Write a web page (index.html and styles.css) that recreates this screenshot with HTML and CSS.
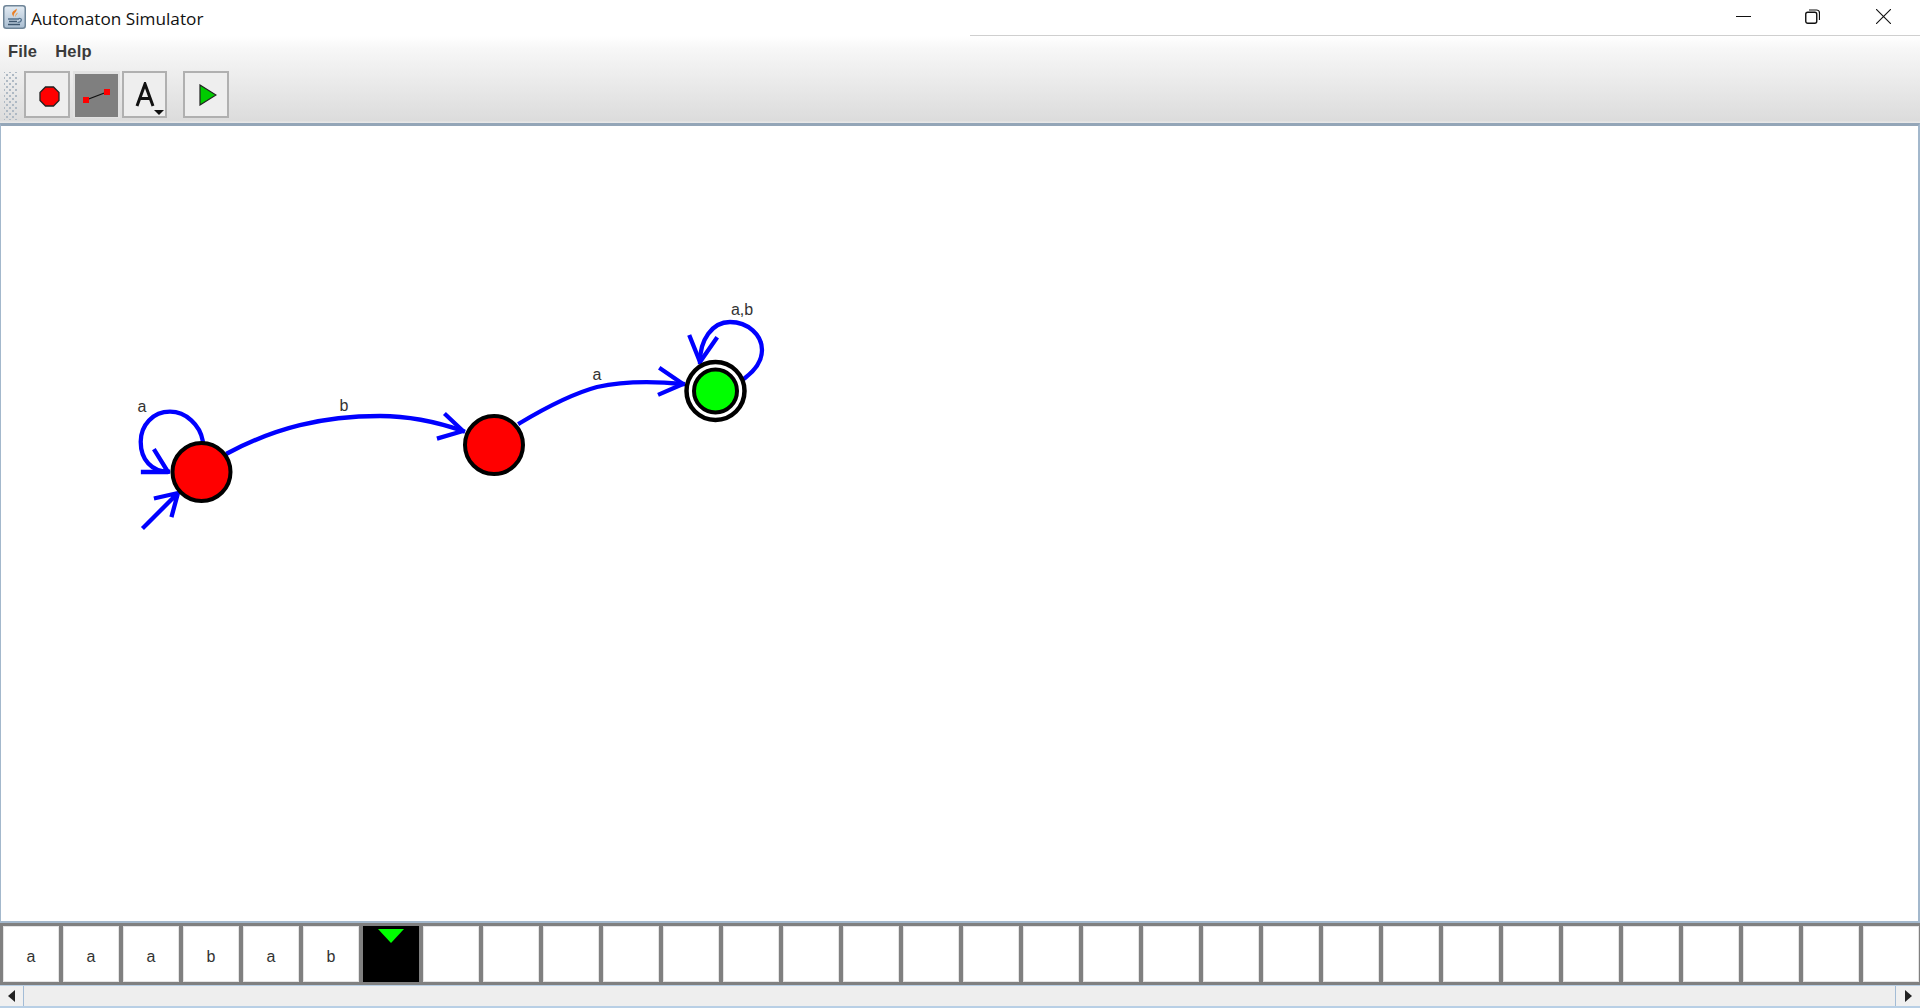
FILE: index.html
```html
<!DOCTYPE html>
<html lang="en">
<head>
<meta charset="utf-8">
<title>Automaton Simulator</title>
<link rel="stylesheet" href="styles.css">
</head>
<body>
<div class="app">
  <div class="top-shadow"></div>
  <header class="titlebar">
    <svg class="app-icon" width="23" height="24" viewBox="0 0 23 24">
      <defs><linearGradient id="ico" x1="0" y1="0" x2="0" y2="1"><stop offset="0" stop-color="#e3ebf3"/><stop offset="1" stop-color="#a9bdd1"/></linearGradient></defs>
      <rect x="0.75" y="0.75" width="21.5" height="22.5" rx="2.5" fill="url(#ico)" stroke="#6f8598" stroke-width="1.5"/>
      <path d="M13.5 3.5c1.5 3-4 4.500-2.500 8.500-2.500-2.500-2.500-4.500-.5-6 1.200-.9 2.500-1.300 3-2.500z" fill="#ea7f26"/>
      <path d="M14.500 7.500c.5 2-2.500 2.500-1.500 5-1.500-1.500-.5-3.500 1.500-5z" fill="#f19a3e"/>
      <path d="M5 14h11" stroke="#53708c" stroke-width="1.500"/>
      <path d="M6 16.500h8" stroke="#3d566e" stroke-width="1.500"/>
      <path d="M5 19.500h12" stroke="#3d566e" stroke-width="1.500"/>
      <path d="M15.500 13.500c4-.5 4 3.500-1 4" stroke="#53708c" stroke-width="1.200" fill="none"/>
    </svg>
    <span class="title">Automaton Simulator</span>
    <div class="window-controls">
      <svg class="win-min" width="15" height="15" viewBox="0 0 15 15"><path d="M0 7.500h15" stroke="#111" stroke-width="1"/></svg>
      <svg class="win-max" width="15" height="15" viewBox="0 0 15 15"><rect x="0.75" y="3.25" width="11" height="11" rx="2" fill="none" stroke="#111" stroke-width="1.400"/><path d="M4 1h7.500a3 3 0 0 1 3 3v7" fill="none" stroke="#111" stroke-width="1.200"/></svg>
      <svg class="win-close" width="15" height="15" viewBox="0 0 15 15"><path d="M0 0l15 15M15 0L0 15" stroke="#111" stroke-width="1.100"/></svg>
    </div>
  </header>
  <div class="chrome">
    <nav class="menubar"><span class="menu-item">File</span><span class="menu-item">Help</span></nav>
    <div class="toolbar">
      <div class="grip"></div>
      <div class="tool tool-state">
        <svg width="21" height="21" viewBox="0 0 21 21"><polygon points="6.500,1 14.500,1 20,6.500 20,14.500 14.500,20 6.500,20 1,14.500 1,6.500" fill="#f00" stroke="#222" stroke-width="1.300"/></svg>
      </div>
      <div class="tool tool-active">
        <svg width="27" height="14" viewBox="0 0 27 14"><path d="M3 11L24 3" stroke="#111" stroke-width="1.300"/><rect x="0" y="8" width="6" height="6" fill="#f00"/><rect x="21" y="0" width="6" height="6" fill="#f00"/></svg>
      </div>
      <div class="tool tool-text">
        <svg width="20" height="25" viewBox="0 0 20 25"><path d="M2 24L10 2L18 24M5 16.500H15" fill="none" stroke="#111" stroke-width="3"/></svg>
        <span class="caret"></span>
      </div>
      <div class="tool tool-run">
        <svg width="18" height="22" viewBox="0 0 18 22"><polygon points="1,1 17,11 1,21" fill="#0c0" stroke="#222" stroke-width="1.200"/></svg>
      </div>
    </div>
  </div>
  <main class="canvas">
    <svg class="diagram" width="1917" height="1008" viewBox="0 0 1917 1008">
      <g class="edges" transform="translate(-1 -126)">
        <path d="M202.700 440.700C200 425 186 411.700 170 411.700C153 411.700 140.700 425 140.700 441.700C140.700 460 152 471.700 168 471.700"/>
        <path d="M143 472H168L155 451"/>
        <path d="M144 527L178 493M156 498L178 493L172 515"/>
        <path d="M228 453C275 428 322 416 380 416C410 416 440 423 463 431"/>
        <path d="M446 415L463 431L439 438"/>
        <path d="M520 423C550 405 575 393 597 387C615 383 640 380 683 384"/>
        <path d="M661 369L683 384L660 394"/>
        <path d="M745 378C758 368 762 358 762 350C762 335 748 322 730 322C712 322 700 340 700 362"/>
        <path d="M690 337L700 362L716 339"/>
      </g>
      <g transform="translate(-1 -126)">
        <circle class="state-red" cx="201.500" cy="472" r="29"/>
        <circle class="state-red" cx="494" cy="445" r="29"/>
        <circle class="state-ring" cx="715.500" cy="391" r="29"/>
        <circle class="state-green" cx="715.500" cy="391" r="21.500"/>
        <text class="label" x="142" y="412">a</text>
        <text class="label" x="344" y="411">b</text>
        <text class="label" x="597" y="380">a</text>
        <text class="label" x="742" y="315">a,b</text>
      </g>
    </svg>
  </main>
  <section class="tape">
    <div class="cell">a</div><div class="cell">a</div><div class="cell">a</div><div class="cell">b</div><div class="cell">a</div><div class="cell">b</div>
    <div class="cell cell-current"><span class="head"></span></div>
    <div class="cell"></div><div class="cell"></div><div class="cell"></div><div class="cell"></div><div class="cell"></div><div class="cell"></div>
    <div class="cell"></div><div class="cell"></div><div class="cell"></div><div class="cell"></div><div class="cell"></div><div class="cell"></div>
    <div class="cell"></div><div class="cell"></div><div class="cell"></div><div class="cell"></div><div class="cell"></div><div class="cell"></div>
    <div class="cell"></div><div class="cell"></div><div class="cell"></div><div class="cell"></div><div class="cell"></div><div class="cell"></div><div class="cell"></div>
  </section>
  <div class="scrollbar">
    <div class="scroll-btn"><span class="arrow-left"></span></div>
    <div class="scroll-track"></div>
    <div class="scroll-btn scroll-btn-right"><span class="arrow-right"></span></div>
  </div>
</div>
</body>
</html>
```
FILE: styles.css
```css
* { box-sizing: border-box; }
html, body { margin: 0; height: 100%; overflow: hidden; background: #fff; }
.app { position: relative; width: 1920px; height: 1008px; display: flex; flex-direction: column; font-family: "Liberation Sans", Arial, sans-serif; }
.top-shadow { position: absolute; left: 790px; top: 0; width: 340px; height: 5px; background: linear-gradient(#f6f6f6, #fff); border-radius: 0 0 50% 50%; }
.titlebar { height: 36px; display: flex; align-items: center; padding: 0 0 0 3px; background: #fff; position: relative; flex: none; }
.titlebar::after { content: ""; position: absolute; left: 970px; right: 0; top: 35px; height: 1px; background: #cfcfcf; }
.app-icon { flex: none; margin-top: -3px; }
.title { font-family: "Open Sans", sans-serif; font-size: 17.200px; margin-left: 5px; margin-top: 1px; color: #111; }
.window-controls { margin-left: auto; display: flex; align-items: center; height: 33px; align-self: flex-start; }
.win-min { margin-right: 54px; }
.win-max { margin-right: 56px; }
.win-close { margin-right: 29px; }
.chrome { height: 87px; flex: none; background: linear-gradient(#fff 0, #f7f7f7 14%, #e8e8e8 60%, #dcdcdc 97%, #eaeaea 100%); }
.menubar { height: 30px; display: flex; align-items: center; gap: 18px; padding-left: 8px; margin-bottom: 2px; }
.menu-item { font-size: 16.500px; font-weight: bold; color: #3a3a3a; letter-spacing: 0.2px; }
.toolbar { height: 55px; display: flex; align-items: flex-start; padding: 3px 0 0 4px; }
.grip { width: 14px; height: 48px; margin: 1px 6px 0 0; background-image: radial-gradient(#aeb9c4 1.200px, transparent 1.500px), radial-gradient(#aeb9c4 1.200px, transparent 1.500px); background-size: 6px 6px; background-position: 0 0, 3px 3px; }
.tool { width: 46px; height: 47px; display: flex; align-items: center; justify-content: center; background: #eee; border: 2px solid #b0b0b0; position: relative; }
.tool-state { margin-right: 3px; padding: 4px 0 0 4px; }
.tool-active { background: #7f7f7f; border: solid #e2e2e2; border-width: 3px 2px 1px 2px; width: 47px; margin-right: 2px; }
.tool-text { width: 45px; margin-right: 16px; }
.tool-run { padding: 0 0 0 3px; }
.caret { position: absolute; right: 1px; bottom: 1px; width: 0; height: 0; border-left: 5px solid transparent; border-right: 5px solid transparent; border-top: 5px solid #111; }
.canvas { flex: 1; border: solid #a3b8cc; border-width: 3px 2px 2px 1px; border-top-color: #94a6b8; background: #fff; overflow: hidden; position: relative; }
.diagram { display: block; }
.edges path { fill: none; stroke: #0000ff; stroke-width: 4.300; stroke-linecap: square; stroke-linejoin: round; }
.state-red { fill: #f00; stroke: #000; stroke-width: 4; }
.state-ring { fill: #fff; stroke: #000; stroke-width: 4.500; }
.state-green { fill: #0f0; stroke: #000; stroke-width: 4; }
.label { font-family: "Liberation Sans", Arial, sans-serif; font-size: 16px; fill: #333; text-anchor: middle; }
.tape { height: 62px; flex: none; background: #808080; display: flex; gap: 4px; padding: 3px 0 3px 3px; overflow: hidden; }
.cell { width: 56px; height: 56px; flex: none; background: #fff; display: flex; align-items: center; justify-content: center; font-size: 16px; color: #333; padding-top: 6px; position: relative; box-shadow: inset 0 0 0 1px #e4e4e4; }
.cell-current { background: #000; box-shadow: none; }
.head { position: absolute; left: 15px; top: 3px; width: 0; height: 0; border-left: 13px solid transparent; border-right: 13px solid transparent; border-top: 14px solid #0f0; }
.scrollbar { height: 23px; flex: none; display: flex; background: #eee; border-top: 1px solid #b8cfe5; border-bottom: 2px solid #b8cfe5; }
.scroll-btn { width: 24px; flex: none; display: flex; align-items: center; justify-content: center; border-right: 1px solid #a3bcd6; background: #f0f0f0; }
.scroll-btn-right { border-right: 0; border-left: 1px solid #a3bcd6; width: 25px; }
.scroll-track { flex: 1; }
.arrow-left { width: 0; height: 0; border-top: 6px solid transparent; border-bottom: 6px solid transparent; border-right: 7px solid #222; }
.arrow-right { width: 0; height: 0; border-top: 6px solid transparent; border-bottom: 6px solid transparent; border-left: 7px solid #222; }
```
